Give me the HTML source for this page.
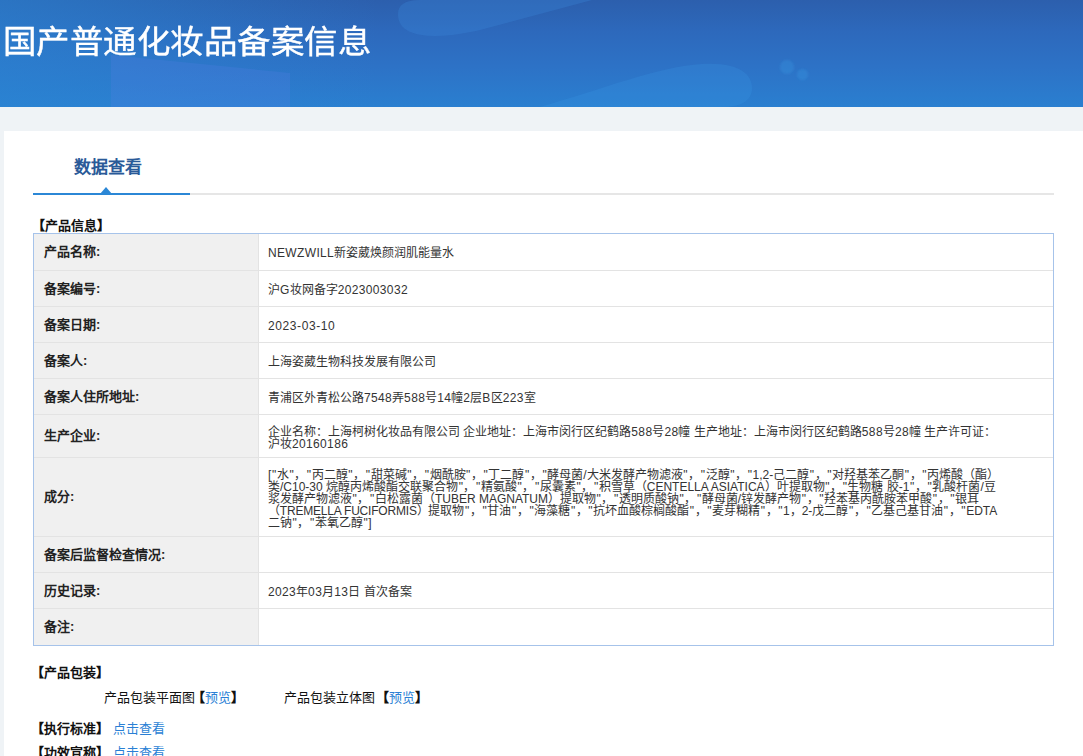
<!DOCTYPE html>
<html lang="zh-CN"><head><meta charset="utf-8">
<style>
*{box-sizing:border-box}
html,body{margin:0;padding:0}
body{width:1083px;height:756px;overflow:hidden;background:#eff3f6;font-family:"Liberation Sans",sans-serif;color:#333;position:relative}
.hd{position:absolute;left:0;top:0;width:1083px;height:107px;overflow:hidden;
background:linear-gradient(180deg,#2c5fad 0%,#2d69bc 30%,#2d72c6 62%,#2a7fd0 100%)}
.hd h1{position:absolute;left:3px;top:23px;margin:0;font-weight:400;-webkit-text-stroke:.4px #fff;font-size:33px;transform-origin:0 0;transform:scale(1.015,0.97);line-height:40px;color:#fff;white-space:nowrap}
.panel{position:absolute;left:4px;top:131px;width:1100px;height:700px;background:#fff}
.tabs{position:absolute;left:29px;top:0;width:1021px;height:64px;border-bottom:2px solid #e6e6e6}
.tab{position:absolute;left:0;top:0;width:157px;height:64px;border-bottom:2px solid #2b87d6;margin-bottom:-2px}
.tab span{position:absolute;left:41px;top:26px;font-size:17px;line-height:22px;font-weight:bold;color:#2a5a98;white-space:nowrap}
.tab i{position:absolute;left:67px;top:56px;width:0;height:0;border-left:6px solid transparent;border-right:6px solid transparent;border-bottom:7px solid #2b87d6}
.sec{position:absolute;font-size:13px;font-weight:bold;color:#111;white-space:nowrap;line-height:16px}
table{position:absolute;left:29px;top:102px;width:1021px;border-collapse:separate;border-spacing:0;border:1px solid #a6c3ea;font-size:12px;line-height:12px}
td{border-top:1px solid #e3e3e3;height:36px;padding:9px 10px 9px 9px;vertical-align:middle;white-space:nowrap}
td.l{width:225px;padding-left:10px;background:#f0f0f0;font-weight:bold;color:#222;font-size:13px;border-right:1px solid #e3e3e3}
td.v{color:#333;padding-top:10px;padding-bottom:8px}
tr:first-child td{border-top:0}
tr:last-child td{height:37px}
tr.m td.v{padding-top:11px;padding-bottom:7px}
.q{font-style:normal;padding:0 .6px}
a{color:#2a7fd5;text-decoration:none}
</style></head><body>
<div class="hd"><svg width="1083" height="107" style="position:absolute;left:0;top:0">
<defs><linearGradient id="lg" x1="0" y1="0" x2="1" y2="0"><stop offset="0" stop-color="#2a86d4" stop-opacity=".55"/><stop offset=".35" stop-color="#2a86d4" stop-opacity="0"/></linearGradient><filter id="bl"><feGaussianBlur stdDeviation=".8"/></filter></defs>
<rect x="0" y="0" width="1083" height="107" fill="url(#lg)"/>
<polygon points="111,55 290,73 290,107 111,107" fill="#5a80e6" fill-opacity=".22"/>
<path d="M398,14 C398,42 445,38 480,30 L592,0 L420,0 C405,0 398,5 398,14 Z" fill="#3d8be0" fill-opacity=".28"/>
<path d="M540,107 C600,90 660,66 702,64 C742,62 752,76 752,88 C752,100 742,107 722,107 Z" fill="#3a9ae6" fill-opacity=".22"/>
<circle cx="787" cy="67" r="7" fill="#3a9ae6" fill-opacity=".3" filter="url(#bl)"/>
<circle cx="802.5" cy="74.5" r="5.5" fill="#3a9ae6" fill-opacity=".3" filter="url(#bl)"/>
</svg><h1>国产普通化妆品备案信息</h1></div>
<div class="panel">
<div class="tabs"><div class="tab"><span>数据查看</span><i></i></div></div>
<div class="sec" style="left:28px;top:87px">【产品信息】</div>
<table>
<tr><td class="l">产品名称:</td><td class="v"><span style="letter-spacing:.35px">NEWZWILL</span>新姿葳焕颜润肌能量水</td></tr>
<tr><td class="l">备案编号:</td><td class="v">沪<span style="letter-spacing:.35px">G</span>妆网备字<span style="letter-spacing:.35px">2023003032</span></td></tr>
<tr><td class="l">备案日期:</td><td class="v"><span style="letter-spacing:.6px">2023-03-10</span></td></tr>
<tr><td class="l">备案人:</td><td class="v">上海姿葳生物科技发展有限公司</td></tr>
<tr><td class="l">备案人住所地址:</td><td class="v">青浦区外青松公路<span style="letter-spacing:.35px">7548</span>弄<span style="letter-spacing:.35px">588</span>号<span style="letter-spacing:.35px">14</span>幢<span style="letter-spacing:.35px">2</span>层<span style="letter-spacing:.35px">B</span>区<span style="letter-spacing:.35px">223</span>室</td></tr>
<tr class="m"><td class="l">生产企业:</td><td class="v">企业名称：上海柯树化妆品有限公司 企业地址：上海市闵行区纪鹤路<span style="letter-spacing:.35px">588</span>号<span style="letter-spacing:.35px">28</span>幢 生产地址：上海市闵行区纪鹤路<span style="letter-spacing:.35px">588</span>号<span style="letter-spacing:.35px">28</span>幢 生产许可证：<br>沪妆<span style="letter-spacing:.35px">20160186</span></td></tr>
<tr class="m"><td class="l">成分:</td><td class="v">[<i class="q">"</i>水<i class="q">"</i>，<i class="q">"</i>丙二醇<i class="q">"</i>，<i class="q">"</i>甜菜碱<i class="q">"</i>，<i class="q">"</i>烟酰胺<i class="q">"</i>，<i class="q">"</i>丁二醇<i class="q">"</i>，<i class="q">"</i>酵母菌/大米发酵产物滤液<i class="q">"</i>，<i class="q">"</i>泛醇<i class="q">"</i>，<i class="q">"</i>1,2-己二醇<i class="q">"</i>，<i class="q">"</i>对羟基苯乙酮<i class="q">"</i>，<i class="q">"</i>丙烯酸（酯）<br>类/C10-30 烷醇丙烯酸酯交联聚合物<i class="q">"</i>，<i class="q">"</i>精氨酸<i class="q">"</i>，<i class="q">"</i>尿囊素<i class="q">"</i>，<i class="q">"</i>积雪草（CENTELLA ASIATICA）叶提取物<i class="q">"</i>，<i class="q">"</i>生物糖 胶-1<i class="q">"</i>，<i class="q">"</i>乳酸杆菌/豆<br>浆发酵产物滤液<i class="q">"</i>，<i class="q">"</i>白松露菌（TUBER MAGNATUM）提取物<i class="q">"</i>，<i class="q">"</i>透明质酸钠<i class="q">"</i>，<i class="q">"</i>酵母菌/锌发酵产物<i class="q">"</i>，<i class="q">"</i>羟苯基丙酰胺苯甲酸<i class="q">"</i>，<i class="q">"</i>银耳<br><span style="letter-spacing:-.2px">（TREMELLA FUCIFORMIS）</span>提取物<i class="q">"</i>，<i class="q">"</i>甘油<i class="q">"</i>，<i class="q">"</i>海藻糖<i class="q">"</i>，<i class="q">"</i>抗坏血酸棕榈酸酯<i class="q">"</i>，<i class="q">"</i>麦芽糊精<i class="q">"</i>，<i class="q">"</i>1，2-戊二醇<i class="q">"</i>，<i class="q">"</i>乙基己基甘油<i class="q">"</i>，<i class="q">"</i>EDTA<br>二钠<i class="q">"</i>，<i class="q">"</i>苯氧乙醇<i class="q">"</i>]</td></tr>
<tr><td class="l">备案后监督检查情况:</td><td class="v"></td></tr>
<tr><td class="l">历史记录:</td><td class="v"><span style="letter-spacing:.35px">2023</span>年<span style="letter-spacing:.35px">03</span>月<span style="letter-spacing:.35px">13</span>日 首次备案</td></tr>
<tr><td class="l">备注:</td><td class="v"></td></tr>
</table>
<div class="sec" style="left:27px;top:534px">【产品包装】</div>
<div class="sec" style="left:100px;top:559px;font-weight:normal">产品包装平面图<b style="margin-left:-3px">【</b><a>预览</a><b>】</b></div>
<div class="sec" style="left:280px;top:559px;font-weight:normal">产品包装立体图<b style="margin-left:1px">【</b><a>预览</a><b>】</b></div>
<div class="sec" style="left:27px;top:590px">【执行标准】 <a style="font-weight:normal">点击查看</a></div>
<div class="sec" style="left:27px;top:614px">【功效宣称】 <a style="font-weight:normal">点击查看</a></div>
</div>
</body></html>
